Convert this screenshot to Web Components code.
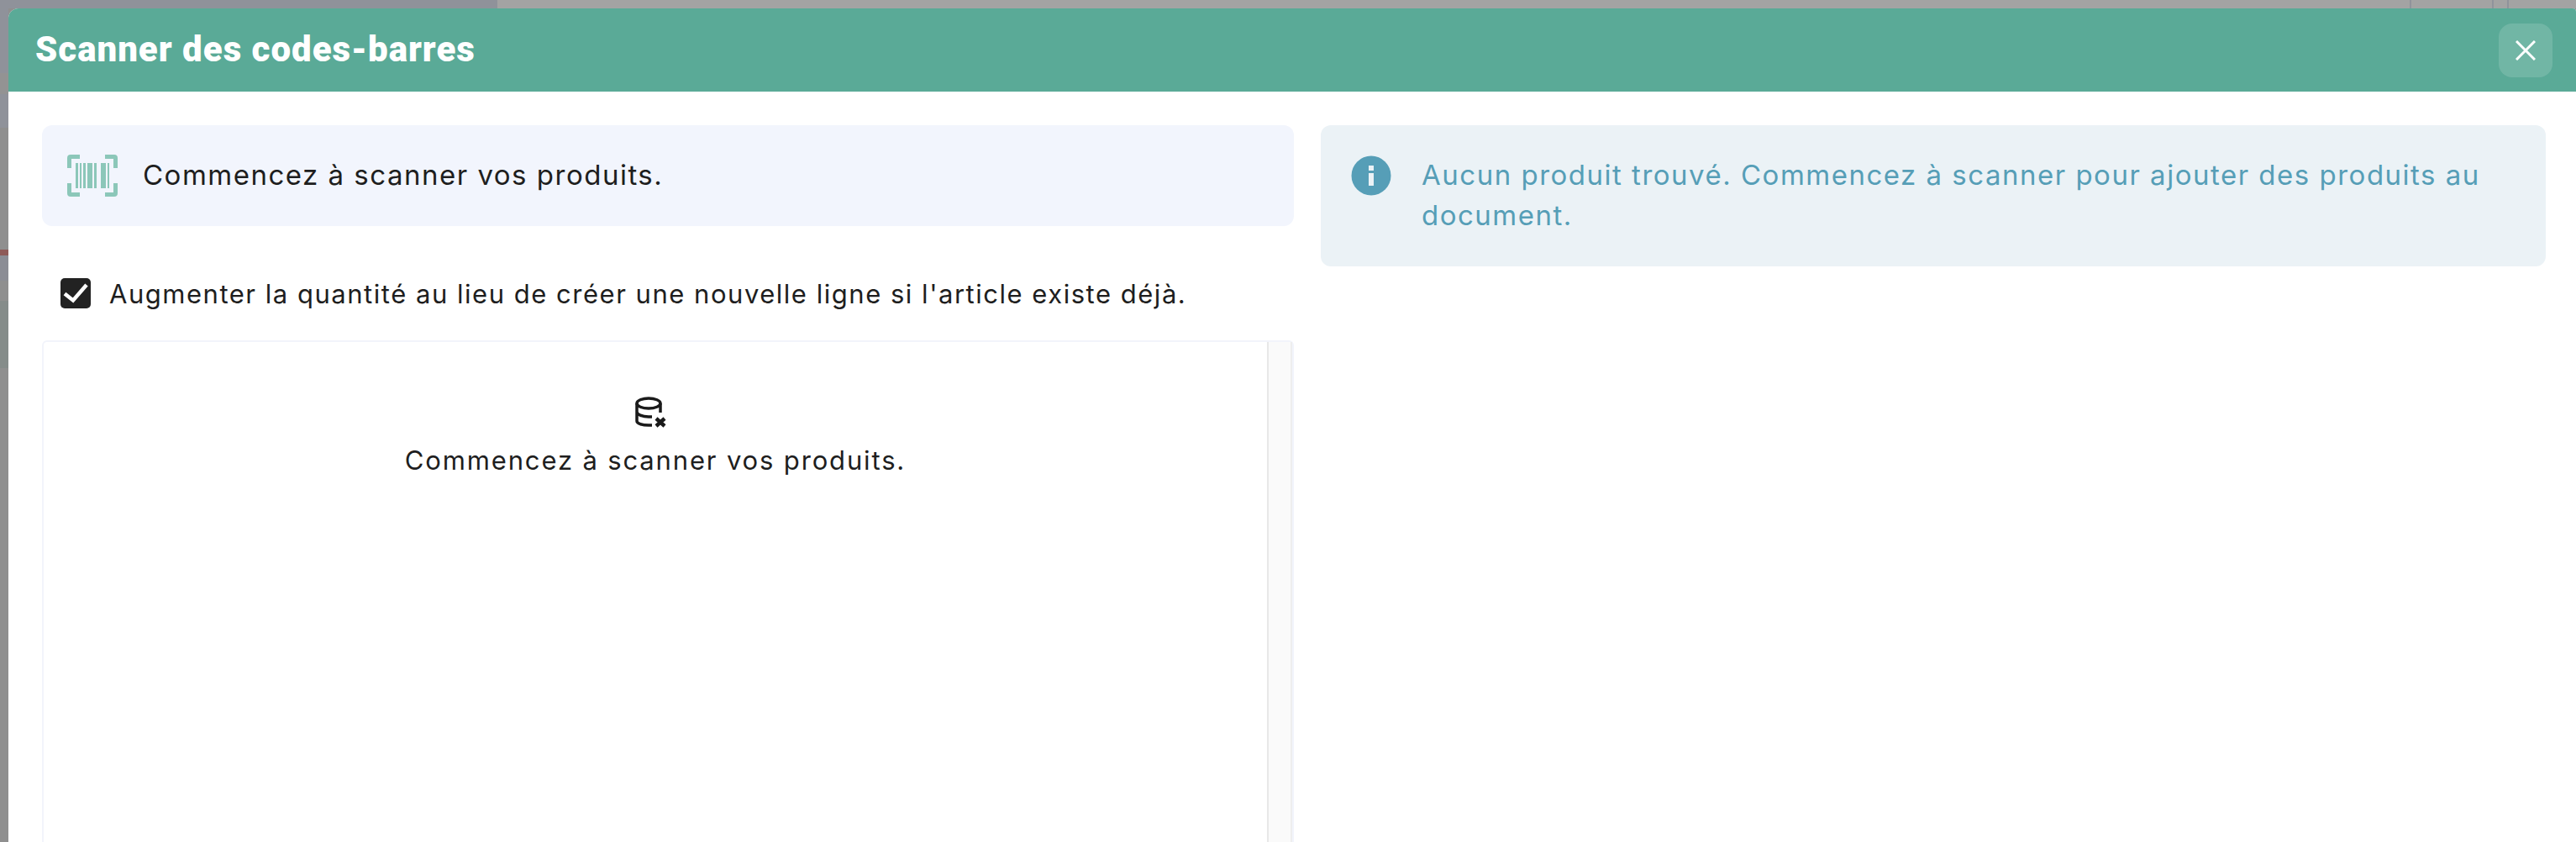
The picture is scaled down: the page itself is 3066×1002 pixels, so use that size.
<!doctype html>
<html lang="fr">
<head>
<meta charset="utf-8">
<style>
  html, body { margin: 0; height: 100%; overflow: hidden; }
  body { background: #9a9a9a; font-family: "Inter", "Liberation Sans", sans-serif; }
</style>
</head>
<body>
<scan-backdrop>
  <scan-dialog title="Scanner des codes-barres">
    <div slot="left">
      <scan-prompt>Commencez à scanner vos produits.</scan-prompt>
      <scan-check>Augmenter la quantité au lieu de créer une nouvelle ligne si l'article existe déjà.</scan-check>
      <scan-table>Commencez à scanner vos produits.</scan-table>
    </div>
    <scan-info slot="right">Aucun produit trouvé. Commencez à scanner pour ajouter des produits au document.</scan-info>
  </scan-dialog>
</scan-backdrop>

<script>
// Greyed page behind the modal, only its edges show
class ScanBackdrop extends HTMLElement {
  constructor() {
    super();
    this.attachShadow({ mode: "open" });
    this.shadowRoot.innerHTML = `
      <style>
        :host {
          display: block;
          height: 1002px;
          overflow: hidden;
          box-sizing: border-box;
          padding: 10px 0 0 10px;
          background-color: #8f8f8f;
          background-repeat: no-repeat;
          background-size: 10px 100%, 100% 10px;
          background-image:
            linear-gradient(180deg,
              #8f929a 0 87px, #939393 87px 112px, #8f929a 112px 152px, #8f8f8f 152px 297px,
              #8e5a58 297px 304px, #8b8d95 304px 334px, #8f8f8f 334px 358px,
              #858c8a 358px 438px, #8f8f8f 438px),
            linear-gradient(90deg,
              #8f929a 0 592px, #a3a3a3 592px 2868px, #90939b 2868px 2870px,
              #a3a3a3 2870px 2966px, #90939b 2966px 2968px, #a3a3a3 2968px 2984px,
              #90939b 2984px 2986px, #a3a3a3 2986px);
        }
      </style>
      <slot></slot>
    `;
  }
}

class ScanDialog extends HTMLElement {
  constructor() {
    super();
    this.attachShadow({ mode: "open" });
    this.shadowRoot.innerHTML = `
      <style>
        :host { display: block; background: #fff; border-radius: 12px 4px 0 0; overflow: hidden; height: 992px; }
        header { height: 99px; background: #5aaa97; display: flex; align-items: center; justify-content: space-between; padding: 0 28px 0 32px; }
        h1 { margin: 0 0 2px; color: #fff; font: 900 42px "Roboto", sans-serif; letter-spacing: 1px; }
        button { width: 64px; height: 64px; border: 0; padding: 0; border-radius: 16px; background: rgba(255,255,255,.14); display: flex; align-items: center; justify-content: center; }
        .body { display: grid; grid-template-columns: 1490px 1458px; gap: 32px; padding: 40px 0 0 40px; }
      </style>
      <header>
        <h1></h1>
        <button aria-label="Fermer">
          <svg width="24" height="24" viewBox="0 0 24 24" fill="none" stroke="#fff" stroke-width="3"><path d="M1 1 23 23M23 1 1 23"/></svg>
        </button>
      </header>
      <div class="body">
        <slot name="left"></slot>
        <slot name="right"></slot>
      </div>
    `;
    this.shadowRoot.querySelector("h1").textContent = this.getAttribute("title");
  }
}

class ScanPrompt extends HTMLElement {
  constructor() {
    super();
    this.attachShadow({ mode: "open" });
    this.shadowRoot.innerHTML = `
      <style>
        :host { display: flex; align-items: center; height: 120px; background: #f2f5fd; border-radius: 12px; padding-left: 30px; gap: 30px; color: #1e1e1e; font-size: 33px; letter-spacing: 1.5px; }
        svg { flex: none; }
        span { padding-bottom: 2px; }
      </style>
      <svg width="60" height="50" viewBox="0 0 60 50" fill="#8cc7b9">
        <path d="M0 16V4a4 4 0 0 1 4-4h11v5H5v11zM60 16V4a4 4 0 0 0-4-4H45v5h10v11zM0 34v12a4 4 0 0 0 4 4h11v-5H5V34zM60 34v12a4 4 0 0 1-4 4H45v-5h10V34z"/>
        <path d="M10 10h3v30h-3zM15 10h2v30h-2zM19 10h3v30h-3zM24 10h6v30h-6zM32 10h3v30h-3zM40 10h6v30h-6zM48 10h2v30h-2z"/>
      </svg>
      <span><slot></slot></span>
    `;
  }
}

class ScanCheck extends HTMLElement {
  constructor() {
    super();
    this.attachShadow({ mode: "open" });
    this.shadowRoot.innerHTML = `
      <style>
        :host { display: flex; align-items: center; height: 36px; margin: 62px 0 38px 22px; gap: 22px; color: #1e1e1e; font-size: 31px; letter-spacing: 1.52px; }
        svg { flex: none; }
      </style>
      <svg width="36" height="36" viewBox="0 0 36 36">
        <rect width="36" height="36" rx="5" fill="#222"/>
        <path d="M5 18.5l10 8L31 8" fill="none" stroke="#fff" stroke-width="4.5"/>
      </svg>
      <span><slot></slot></span>
    `;
  }
}

class ScanTable extends HTMLElement {
  constructor() {
    super();
    this.attachShadow({ mode: "open" });
    this.shadowRoot.innerHTML = `
      <style>
        :host { display: grid; grid-template-columns: 1fr 30px; height: 700px; border: 2px solid #f2f4fb; border-bottom: 0; border-radius: 6px 6px 0 0; color: #1e1e1e; font-size: 31px; letter-spacing: 1.85px; }
        .empty { display: flex; flex-direction: column; align-items: center; padding-top: 65px; }
        .bar { background: #fafafa; border-left: 2px solid #e8e8e8; border-right: 2px solid #eeeeee; }
        svg { display: block; margin: 0 12px 16px 0; }
        span { line-height: 45px; }
      </style>
      <div class="empty">
        <svg width="37" height="37" viewBox="0 0 37 37" fill="none" stroke="#1a1a1a" stroke-width="3.5">
          <ellipse cx="16" cy="8" rx="14" ry="6"/>
          <path d="M2 8v21c0 3 6 5 14 5h4M2 18c0 3 6 6 14 6h4M30 8v11"/>
          <path d="M25 26l10 9M35 26l-10 9" stroke-width="4.5"/>
        </svg>
        <span><slot></slot></span>
      </div>
      <div class="bar"></div>
    `;
  }
}

class ScanInfo extends HTMLElement {
  constructor() {
    super();
    this.attachShadow({ mode: "open" });
    this.shadowRoot.innerHTML = `
      <style>
        :host { display: flex; align-items: flex-start; align-self: start; background: #ebf2f6; border-radius: 12px; padding: 36px 60px 36px 36px; gap: 36px; color: #569eb7; font-size: 33px; line-height: 48px; letter-spacing: 1.5px; }
        svg { flex: none; }
        span { margin-top: -1px; margin-bottom: 1px; }
      </style>
      <svg width="48" height="48" viewBox="0 0 48 48">
        <circle cx="24" cy="24" r="23.5" fill="#569eb7"/>
        <rect x="21" y="12" width="6" height="6" fill="#ebf2f6"/>
        <rect x="21" y="21" width="6" height="15" fill="#ebf2f6"/>
      </svg>
      <span><slot></slot></span>
    `;
  }
}

customElements.define("scan-backdrop", ScanBackdrop);
customElements.define("scan-dialog", ScanDialog);
customElements.define("scan-prompt", ScanPrompt);
customElements.define("scan-check", ScanCheck);
customElements.define("scan-table", ScanTable);
customElements.define("scan-info", ScanInfo);
</script>
</body>
</html>
